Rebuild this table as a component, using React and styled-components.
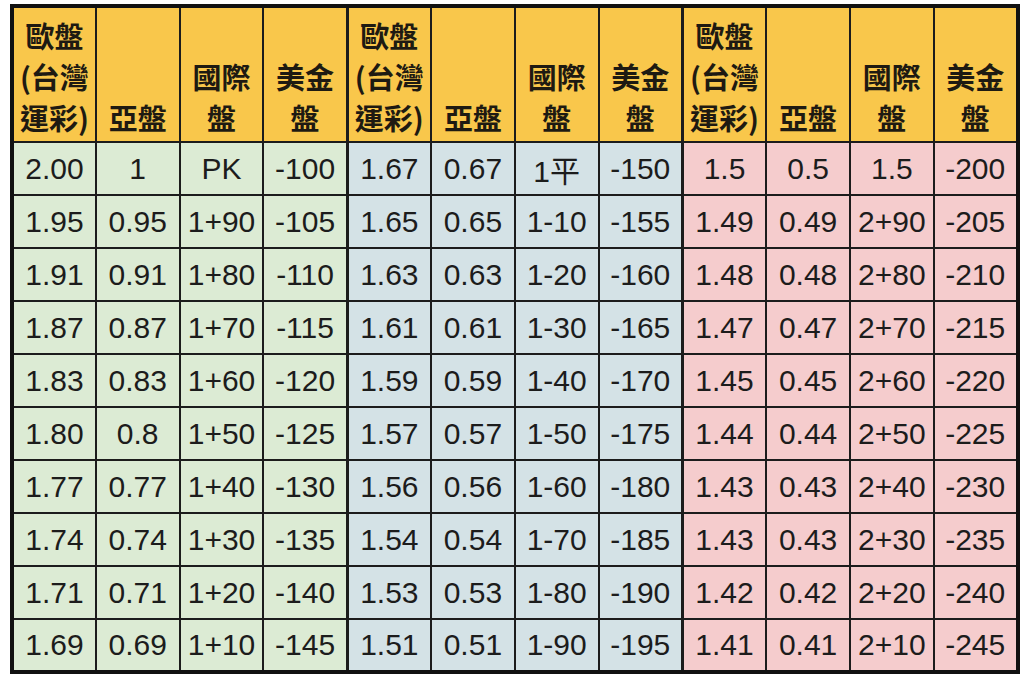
import React from 'react';
import styled, { createGlobalStyle } from 'styled-components';

const GlobalStyle = createGlobalStyle`
  html, body {
    margin: 0;
    padding: 0;
    background: #ffffff;
  }
`;

const groupColors = {
  green: '#dcebd4',
  blue: '#d4e2e6',
  pink: '#f5cccd',
};

const groups = ['green', 'blue', 'pink'];

const rows = [
  ['2.00', '1', 'PK', '-100', '1.67', '0.67', '1平', '-150', '1.5', '0.5', '1.5', '-200'],
  ['1.95', '0.95', '1+90', '-105', '1.65', '0.65', '1-10', '-155', '1.49', '0.49', '2+90', '-205'],
  ['1.91', '0.91', '1+80', '-110', '1.63', '0.63', '1-20', '-160', '1.48', '0.48', '2+80', '-210'],
  ['1.87', '0.87', '1+70', '-115', '1.61', '0.61', '1-30', '-165', '1.47', '0.47', '2+70', '-215'],
  ['1.83', '0.83', '1+60', '-120', '1.59', '0.59', '1-40', '-170', '1.45', '0.45', '2+60', '-220'],
  ['1.80', '0.8', '1+50', '-125', '1.57', '0.57', '1-50', '-175', '1.44', '0.44', '2+50', '-225'],
  ['1.77', '0.77', '1+40', '-130', '1.56', '0.56', '1-60', '-180', '1.43', '0.43', '2+40', '-230'],
  ['1.74', '0.74', '1+30', '-135', '1.54', '0.54', '1-70', '-185', '1.43', '0.43', '2+30', '-235'],
  ['1.71', '0.71', '1+20', '-140', '1.53', '0.53', '1-80', '-190', '1.42', '0.42', '2+20', '-240'],
  ['1.69', '0.69', '1+10', '-145', '1.51', '0.51', '1-90', '-195', '1.41', '0.41', '2+10', '-245'],
];

const headers = [
  ['歐盤', '(台灣', '運彩)'],
  ['亞盤'],
  ['國際', '盤'],
  ['美金', '盤'],
];

const Page = styled.div`
  padding: 4px 0 0 10px;
`;

const Table = styled.table`
  width: 1006px;
  table-layout: fixed;
  border-collapse: collapse;
  border: 4px solid #111;
`;

const Col = styled.col`
  width: 83.8px;
`;

const HeadRow = styled.tr`
  height: 136px;
`;

const BodyRow = styled.tr`
  height: 53px;
`;

const HeadCell = styled.th`
  background: #f9c74b;
  color: #1e1a12;
  font-family: "Noto Sans CJK TC", "Noto Sans CJK SC", sans-serif;
  font-weight: 700;
  font-size: 29px;
  line-height: 41px;
  text-align: center;
  vertical-align: bottom;
  padding: 0 0 3px;
  border: 2px solid #1c1c1c;
  border-left-width: ${(p) => (p.$groupStart ? '3px' : '2px')};
  white-space: nowrap;
`;

const Cell = styled.td`
  background: ${(p) => groupColors[p.$group]};
  color: #1c1c1c;
  font-family: "Liberation Sans", Arial, "Noto Sans CJK TC", sans-serif;
  font-size: 30px;
  text-align: center;
  vertical-align: middle;
  padding: 0;
  border: 2px solid #1c1c1c;
  border-left-width: ${(p) => (p.$groupStart ? '3px' : '2px')};
  white-space: nowrap;
`;

const Line = styled.span`
  display: block;
`;

export default function App() {
  return (
    <>
      <GlobalStyle />
      <Page>
        <Table>
          <colgroup>
            {Array.from({ length: 12 }).map((_, i) => (
              <Col key={i} />
            ))}
          </colgroup>
          <thead>
            <HeadRow>
              {groups.map((g, gi) =>
                headers.map((lines, hi) => (
                  <HeadCell key={`${g}-${hi}`} $groupStart={gi > 0 && hi === 0}>
                    {lines.map((l) => (
                      <Line key={l}>{l}</Line>
                    ))}
                  </HeadCell>
                ))
              )}
            </HeadRow>
          </thead>
          <tbody>
            {rows.map((row, ri) => (
              <BodyRow key={ri}>
                {row.map((v, ci) => (
                  <Cell
                    key={ci}
                    $group={groups[Math.floor(ci / 4)]}
                    $groupStart={ci > 0 && ci % 4 === 0}
                  >
                    {v}
                  </Cell>
                ))}
              </BodyRow>
            ))}
          </tbody>
        </Table>
      </Page>
    </>
  );
}
